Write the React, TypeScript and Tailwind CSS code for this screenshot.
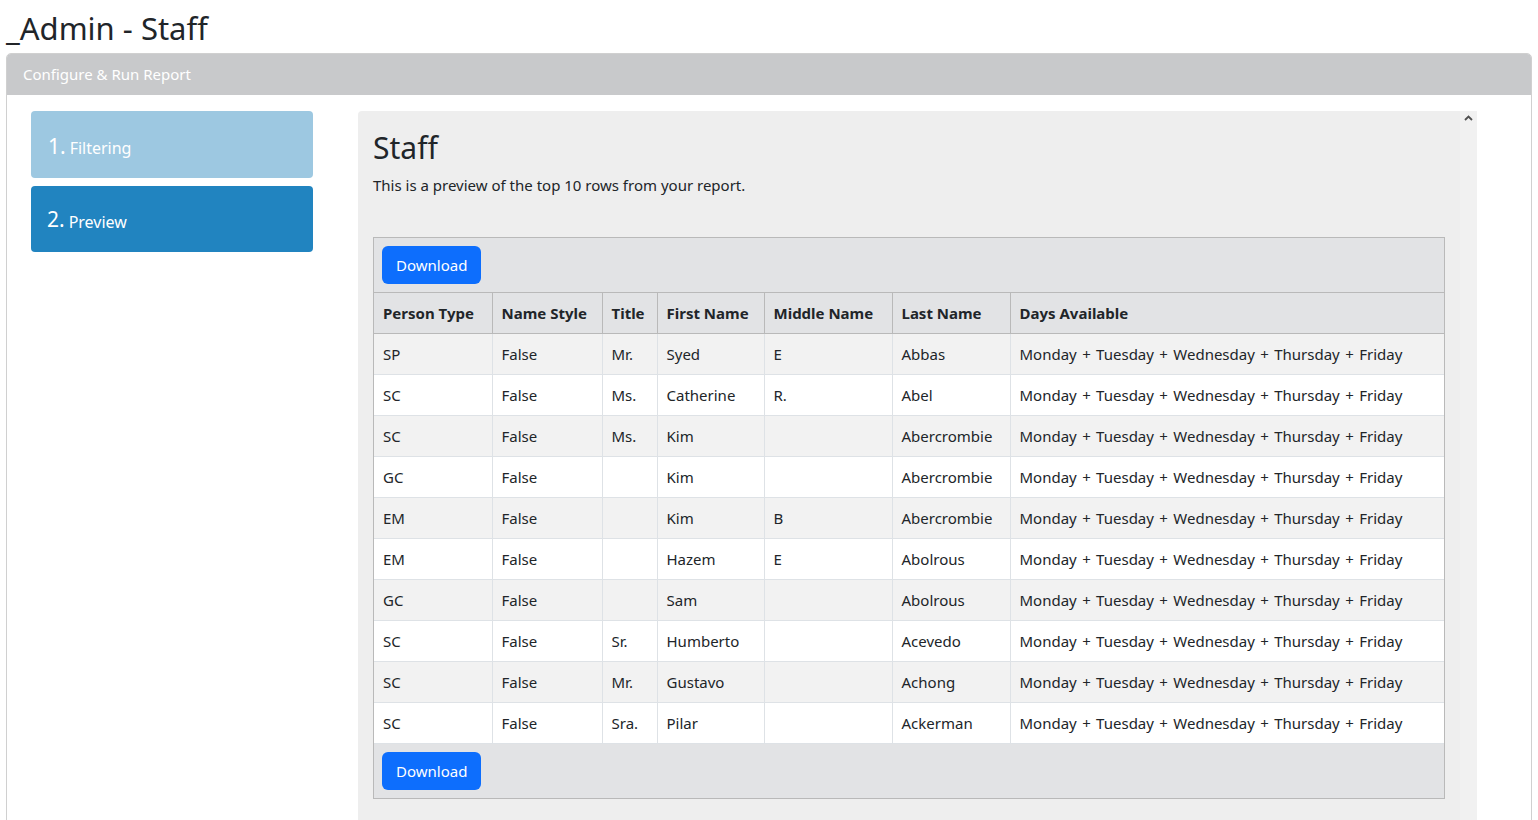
import React from "react";

const rows = [
  ["SP", "False", "Mr.", "Syed", "E", "Abbas"],
  ["SC", "False", "Ms.", "Catherine", "R.", "Abel"],
  ["SC", "False", "Ms.", "Kim", "", "Abercrombie"],
  ["GC", "False", "", "Kim", "", "Abercrombie"],
  ["EM", "False", "", "Kim", "B", "Abercrombie"],
  ["EM", "False", "", "Hazem", "E", "Abolrous"],
  ["GC", "False", "", "Sam", "", "Abolrous"],
  ["SC", "False", "Sr.", "Humberto", "", "Acevedo"],
  ["SC", "False", "Mr.", "Gustavo", "", "Achong"],
  ["SC", "False", "Sra.", "Pilar", "", "Ackerman"],
];

const days = "Monday + Tuesday + Wednesday + Thursday + Friday";

const columns = [
  { label: "Person Type", w: "w-[118px]" },
  { label: "Name Style", w: "w-[110px]" },
  { label: "Title", w: "w-[55px]" },
  { label: "First Name", w: "w-[107px]" },
  { label: "Middle Name", w: "w-[128px]" },
  { label: "Last Name", w: "w-[118px]" },
  { label: "Days Available", w: "" },
];

function DownloadButton() {
  return (
    <button className="h-[38px] px-[14px] rounded-[6px] bg-[#0d6efd] text-white text-[15px] leading-none">
      Download
    </button>
  );
}

export default function App() {
  return (
    <div className="min-h-screen bg-white text-[#212529] font-['Noto_Sans',sans-serif]">
      <h1 className="pl-[6px] pt-[8px] text-[31px] leading-[40px] h-[53px]">_Admin - Staff</h1>

      <div className="mx-[6px] border border-[#d0d0d0] rounded-t-[5px] overflow-hidden">
        {/* header */}
        <div className="h-[41px] bg-[#c8c9cb] flex items-center px-[16px] text-[15px] text-white">
          Configure &amp; Run Report
        </div>

        <div className="flex pt-[16px] pl-[24px] min-h-[740px]">
          {/* steps */}
          <div className="w-[282px] flex flex-col gap-[8px]">
            <div className="h-[67px] rounded-[4px] bg-[#9dc8e1] text-white flex items-center px-[17px] pt-[4px]">
              <span className="text-[21px] mr-[4px]">1.</span>
              <span className="text-[16px] pt-[3px]">Filtering</span>
            </div>
            <div className="h-[66px] rounded-[4px] bg-[#2184c0] text-white flex items-center px-[16px] pt-[2px]">
              <span className="text-[21px] mr-[4px]">2.</span>
              <span className="text-[16px] pt-[3px]">Preview</span>
            </div>
          </div>

          {/* preview panel */}
          <div className="ml-[45px] w-[1119px] bg-[#eeeeee] rounded-tl-[4px] relative pl-[15px] pr-[32px]">
            <div className="absolute right-0 top-0 bottom-0 w-[17px] bg-[#f1f1f1] flex justify-center pt-[4px]">
              <svg width="9" height="6" viewBox="0 0 9 6">
                <path d="M1 5 L4.5 1.5 L8 5" stroke="#505050" strokeWidth="1.8" fill="none" />
              </svg>
            </div>
            <h2 className="text-[30px] leading-[38px] pt-[18px]">Staff</h2>
            <p className="text-[15px] mt-[6px] leading-[24px]">This is a preview of the top 10 rows from your report.</p>

            <div className="mt-[40px] border border-[#b9b9b9] bg-[#e2e3e5]">
              <div className="h-[54px] flex items-center px-[8px]">
                <DownloadButton />
              </div>
              <table className="w-full border-collapse text-[15px]">
                <thead>
                  <tr className="h-[41px] bg-[#e2e3e5] border-y border-[#b9b9b9]">
                    {columns.map((c, i) => (
                      <th
                        key={c.label}
                        className={`${c.w} text-left font-bold px-[9px] ${i > 0 ? "border-l border-[#b9b9b9]" : ""}`}
                      >
                        {c.label}
                      </th>
                    ))}
                  </tr>
                </thead>
                <tbody>
                  {rows.map((r, ri) => (
                    <tr
                      key={ri}
                      className={`h-[41px] border-b border-[#dee2e6] ${ri % 2 === 0 ? "bg-[#f2f2f2]" : "bg-white"}`}
                    >
                      {[...r, days].map((cell, ci) => (
                        <td
                          key={ci}
                          className={`px-[9px] ${ci > 0 ? "border-l border-[#dee2e6]" : ""} ${ci === 6 ? "[word-spacing:1.5px]" : ""}`}
                        >
                          {cell}
                        </td>
                      ))}
                    </tr>
                  ))}
                </tbody>
              </table>
              <div className="h-[54px] flex items-center px-[8px]">
                <DownloadButton />
              </div>
            </div>
          </div>
        </div>
      </div>
    </div>
  );
}
